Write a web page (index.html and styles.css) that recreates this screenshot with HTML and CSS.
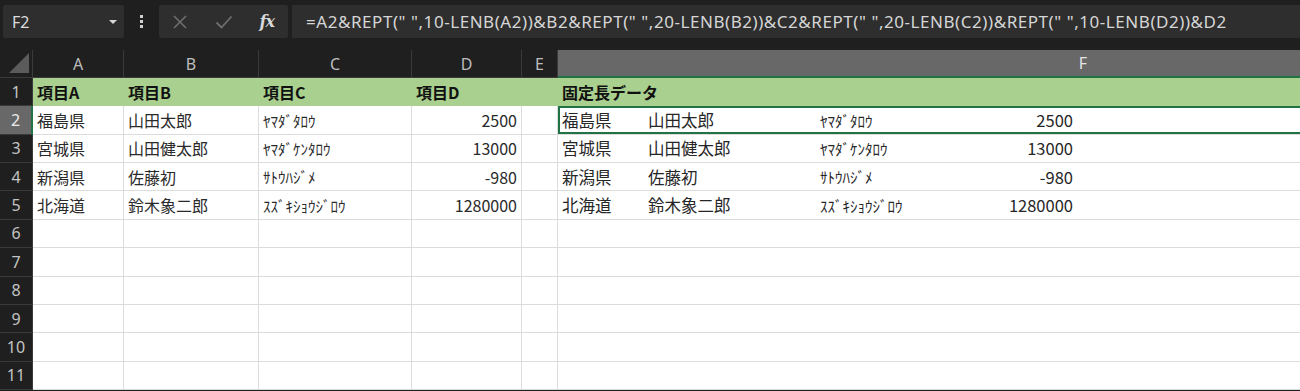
FILE: index.html
```html
<!DOCTYPE html>
<html lang="ja">
<head>
<meta charset="utf-8">
<link rel="stylesheet" href="styles.css">
</head>
<body>
<div class="app">
  <div class="fbar">
    <div class="namebox"><span class="ref">F2</span><span class="caret"></span></div>
    <div class="dots"><i></i><i></i><i></i></div>
    <div class="btns">
      <svg class="ico" width="16" height="16" viewBox="0 0 16 16"><path d="M2 2 L14 14 M14 2 L2 14" stroke="#6e6e6e" stroke-width="1.6" fill="none"/></svg>
      <svg class="ico" width="18" height="16" viewBox="0 0 18 16"><path d="M1.5 8.5 L6.5 13.5 L16.5 2.5" stroke="#6e6e6e" stroke-width="1.8" fill="none"/></svg>
      <span class="fx">fx</span>
    </div>
    <div class="formula">=A2&amp;REPT(" ",10-LENB(A2))&amp;B2&amp;REPT(" ",20-LENB(B2))&amp;C2&amp;REPT(" ",20-LENB(C2))&amp;REPT(" ",10-LENB(D2))&amp;D2</div>
  </div>
  <div class="sheet">
    <div class="ch corner"><svg width="22" height="22" viewBox="0 0 22 22"><path d="M21 1 L21 21 L1 21 Z" fill="#5b5b5b"/></svg></div>
    <div class="ch">A</div><div class="ch">B</div><div class="ch">C</div><div class="ch">D</div><div class="ch">E</div><div class="ch sel">F</div>

    <div class="rh">1</div>
    <div class="c hd">項目A</div><div class="c hd">項目B</div><div class="c hd">項目C</div><div class="c hd">項目D</div><div class="c hd"></div><div class="c hd">固定長データ</div>

    <div class="rh rsel">2</div>
    <div class="c">福島県</div><div class="c">山田太郎</div><div class="c kana">ﾔﾏﾀﾞﾀﾛｳ</div><div class="c num">2500</div><div class="c"></div>
    <div class="c fixed active"><span class="s1">福島県</span><span class="s2">山田太郎</span><span class="s2 k">ﾔﾏﾀﾞﾀﾛｳ</span><span class="s3">2500</span></div>

    <div class="rh">3</div>
    <div class="c">宮城県</div><div class="c">山田健太郎</div><div class="c kana">ﾔﾏﾀﾞｹﾝﾀﾛｳ</div><div class="c num">13000</div><div class="c"></div>
    <div class="c fixed"><span class="s1">宮城県</span><span class="s2">山田健太郎</span><span class="s2 k">ﾔﾏﾀﾞｹﾝﾀﾛｳ</span><span class="s3">13000</span></div>

    <div class="rh">4</div>
    <div class="c">新潟県</div><div class="c">佐藤初</div><div class="c kana">ｻﾄｳﾊｼﾞﾒ</div><div class="c num">-980</div><div class="c"></div>
    <div class="c fixed"><span class="s1">新潟県</span><span class="s2">佐藤初</span><span class="s2 k">ｻﾄｳﾊｼﾞﾒ</span><span class="s3">-980</span></div>

    <div class="rh">5</div>
    <div class="c">北海道</div><div class="c">鈴木象二郎</div><div class="c kana">ｽｽﾞｷｼｮｳｼﾞﾛｳ</div><div class="c num">1280000</div><div class="c"></div>
    <div class="c fixed"><span class="s1">北海道</span><span class="s2">鈴木象二郎</span><span class="s2 k">ｽｽﾞｷｼｮｳｼﾞﾛｳ</span><span class="s3">1280000</span></div>

    <div class="rh">6</div><div class="c"></div><div class="c"></div><div class="c"></div><div class="c"></div><div class="c"></div><div class="c"></div>
    <div class="rh">7</div><div class="c"></div><div class="c"></div><div class="c"></div><div class="c"></div><div class="c"></div><div class="c"></div>
    <div class="rh">8</div><div class="c"></div><div class="c"></div><div class="c"></div><div class="c"></div><div class="c"></div><div class="c"></div>
    <div class="rh">9</div><div class="c"></div><div class="c"></div><div class="c"></div><div class="c"></div><div class="c"></div><div class="c"></div>
    <div class="rh">10</div><div class="c"></div><div class="c"></div><div class="c"></div><div class="c"></div><div class="c"></div><div class="c"></div>
    <div class="rh">11</div><div class="c"></div><div class="c"></div><div class="c"></div><div class="c"></div><div class="c"></div><div class="c"></div>
  </div>
</div>
</body>
</html>
```
FILE: styles.css
```css
* { box-sizing: border-box; }
html, body { margin: 0; padding: 0; background: #1f1f1f; overflow: hidden; }
.app { width: 1300px; height: 391px; overflow: hidden; background: #1f1f1f; }

.fbar {
  height: 46px;
  display: flex;
  align-items: flex-start;
  padding: 5px 0 0 3px;
  gap: 0;
}
.namebox {
  width: 121px; height: 33px;
  background: #2e2e2e;
  border-radius: 2px;
  display: flex; align-items: center; justify-content: space-between;
  padding: 0 7px 0 9px;
  font-family: "Noto Sans", sans-serif; font-size: 16px; color: #dcdcdc;
}
.caret { width: 0; height: 0; border-left: 4px solid transparent; border-right: 4px solid transparent; border-top: 4px solid #d8d8d8; }
.dots { width: 35px; height: 33px; display: flex; flex-direction: column; align-items: center; justify-content: center; gap: 2px; }
.dots i { display: block; width: 3px; height: 3px; background: #d0d0d0; }
.btns {
  width: 129px; height: 33px;
  background: #2e2e2e;
  border-radius: 2px;
  display: flex; align-items: center; justify-content: space-between;
  padding: 0 14px 0 13px;
}
.fx { font-family: "DejaVu Serif", "Liberation Serif", serif; font-style: italic; font-weight: bold; font-size: 16px; color: #d8d8d8; letter-spacing: -1px; }
.formula {
  margin-left: 4px;
  flex: 1;
  height: 33px;
  background: #2e2e2e;
  padding: 0 0 0 14px;
  display: flex; align-items: center;
  font-family: "Noto Sans", sans-serif; font-size: 17px; letter-spacing: 0.55px; color: #d6d6d6;
  white-space: pre;
}

.sheet {
  display: grid;
  grid-template-columns: 33px 91px 135px 153px 110px 36px 1050px;
  grid-template-rows: 32px repeat(11, 28.36px);
  font-family: "Noto Sans CJK JP", sans-serif;
}
.ch {
  background: #1f1f1f;
  border-right: 1px solid #3a3a3a;
  border-bottom: 1px solid #3a3a3a;
  margin-top: 4px;
  display: flex; align-items: center; justify-content: center;
  font-family: "Noto Sans", sans-serif; font-size: 16px; color: #bdbdbd;
  padding-top: 0;
}
.ch.corner { justify-content: flex-end; align-items: flex-end; padding: 0 2px 3px 0; }
.ch.sel { background: #686868; color: #e4e4e4; border-bottom: 2px solid #217346; border-right: none; }
.rh {
  background: #1f1f1f;
  border-bottom: 1px solid #3a3a3a;
  border-right: 1px solid #3a3a3a;
  display: flex; align-items: center; justify-content: center;
  font-family: "Noto Sans", sans-serif; font-size: 16px; color: #c4c4c4;
}
.rh.rsel { background: #686868; color: #ececec; border-right: 2px solid #217346; }

.c {
  background: #ffffff;
  border-right: 1px solid #dcdcdc;
  border-bottom: 1px solid #dcdcdc;
  display: flex; align-items: center;
  padding: 0 4px;
  font-size: 16px; color: #2a2a2a;
  white-space: nowrap; overflow: hidden;
}
.c.hd { background: #a9d08e; border-color: #a9d08e; font-weight: bold; color: #111; }
.c.kana { font-size: 15px; }
.c.num { justify-content: flex-end; }
.c.fixed { font-size: 16.5px; color: #262626; }
.c.active { box-shadow: inset 0 0 0 2px #217346; }
.s1 { width: 86px; flex: none; }
.s2 { width: 172px; flex: none; }
.s2.k { font-size: 15px; }
.s3 { width: 81px; flex: none; text-align: right; }
```
